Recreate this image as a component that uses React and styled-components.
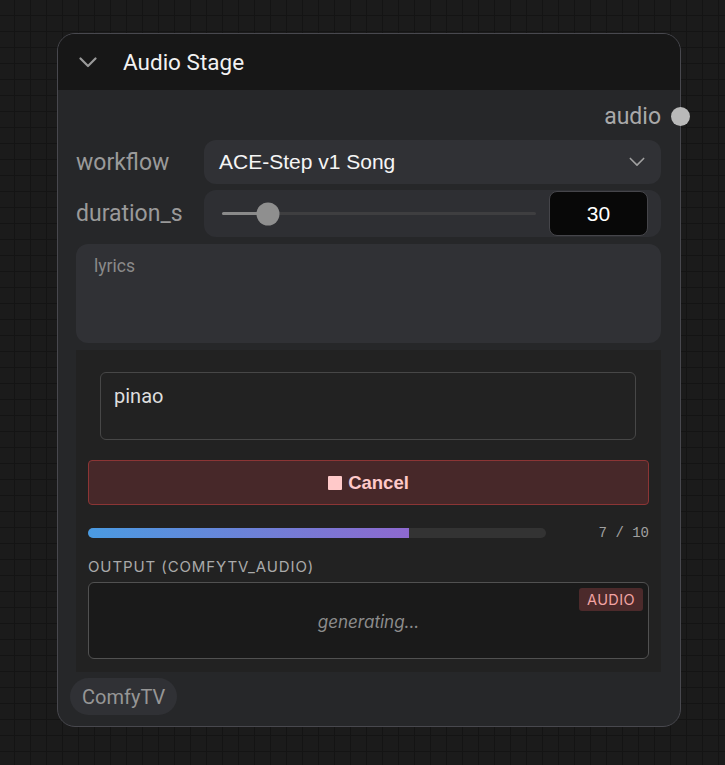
import React from "react";
import styled, { createGlobalStyle } from "styled-components";

const Global = createGlobalStyle`
  html, body { margin: 0; padding: 0; }
  body {
    width: 725px; height: 765px; overflow: hidden;
    background-color: #1b1b1b;
    background-image:
      linear-gradient(to right, #141414 1px, transparent 1px),
      linear-gradient(to bottom, #141414 1px, transparent 1px);
    background-size: 16px 16px;
    background-position: 14px 15px;
    font-family: "Liberation Sans", Arial, sans-serif;
  }
`;

const Canvas = styled.div`
  position: relative;
  width: 725px;
  height: 765px;
`;

const Node = styled.div`
  position: absolute;
  left: 57px;
  top: 33px;
  width: 622px;
  height: 692px;
  border: 1px solid #48484e;
  border-radius: 18px;
  background: #262729;
  display: flex;
  flex-direction: column;
  box-sizing: content-box;
`;

const Header = styled.div`
  height: 56px;
  background: #171717;
  border-radius: 17px 17px 0 0;
  display: flex;
  align-items: center;
  padding-left: 21px;
  gap: 26px;
`;

const Title = styled.div`
  font-family: Roboto, "Liberation Sans", sans-serif;
  font-size: 22.5px;
  font-weight: 400;
  color: #f2f2f2;
`;

const Body = styled.div`
  display: flex;
  flex-direction: column;
  padding: 14px 19px 0 18px;
`;

const OutputRow = styled.div`
  position: relative;
  height: 24px;
  display: flex;
  justify-content: flex-end;
  align-items: center;
  margin-bottom: 12px;
`;

const OutputName = styled.span`
  font-family: Roboto, "Liberation Sans", sans-serif;
  font-size: 23px;
  color: #a9a9a9;
`;

const Socket = styled.span`
  position: absolute;
  right: -29px;
  top: 3px;
  width: 19px;
  height: 19px;
  border-radius: 50%;
  background: #b9b9b9;
`;

const WidgetRow = styled.div`
  display: flex;
  align-items: center;
  height: ${(p) => p.$h}px;
  margin-bottom: ${(p) => p.$mb}px;
`;

const Label = styled.div`
  width: 128px;
  flex: none;
  font-family: Roboto, "Liberation Sans", sans-serif;
  font-size: 23px;
  color: #9a9a9a;
`;

const Select = styled.div`
  flex: 1;
  height: 100%;
  background: #303135;
  border-radius: 12px;
  display: flex;
  align-items: center;
  justify-content: space-between;
  padding: 0 16px 0 15px;
  font-size: 21px;
  color: #f5f5f5;
`;

const SliderBox = styled.div`
  flex: 1;
  height: 100%;
  background: #2e2f33;
  border-radius: 12px;
  display: flex;
  align-items: center;
  padding: 1px 13px 1px 18px;
  gap: 13px;
  box-sizing: border-box;
`;

const Track = styled.div`
  position: relative;
  flex: 1;
  height: 3px;
  background: #3e3e40;
  border-radius: 2px;
`;

const TrackFill = styled.div`
  height: 100%;
  background: #8a8a8a;
  border-radius: 2px;
`;

const Thumb = styled.div`
  position: absolute;
  top: 50%;
  width: 23px;
  height: 23px;
  border-radius: 50%;
  background: #8f8f8f;
  transform: translate(-50%, -50%);
`;

const NumberBox = styled.div`
  width: 99px;
  height: 100%;
  box-sizing: border-box;
  background: #080808;
  border: 1px solid #45454a;
  border-radius: 8px;
  display: flex;
  align-items: center;
  justify-content: center;
  font-size: 21px;
  color: #ffffff;
`;

const Lyrics = styled.div`
  height: 99px;
  margin-bottom: 7px;
  background: #303135;
  border-radius: 12px;
  padding: 12px 18px;
  box-sizing: border-box;
  font-family: Roboto, "Liberation Sans", sans-serif;
  font-size: 17.5px;
  color: #8a8a8a;
`;

const Panel = styled.div`
  background: #222222;
  display: flex;
  flex-direction: column;
  padding: 22px 12px 13px;
  margin-bottom: 6px;
`;

const Prompt = styled.div`
  margin: 0 13px 20px 12px;
  height: 68px;
  box-sizing: border-box;
  border: 1px solid #474747;
  border-radius: 6px;
  background: #222222;
  padding: 11px 13px;
  font-family: Roboto, "Liberation Sans", sans-serif;
  font-size: 20px;
  color: #dedede;
`;

const CancelButton = styled.div`
  height: 45px;
  box-sizing: border-box;
  background: #472829;
  border: 1px solid #8c3535;
  border-radius: 4px;
  display: flex;
  align-items: center;
  justify-content: center;
  gap: 6px;
  font-size: 18.5px;
  font-weight: 700;
  color: #ffc9c9;
  margin-bottom: 22px;
  padding-top: 1px;
`;

const StopSquare = styled.span`
  width: 14px;
  height: 14px;
  background: #ffc9c9;
  border-radius: 1px;
`;

const ProgressRow = styled.div`
  display: flex;
  align-items: center;
  height: 10px;
  margin-top: 1px;
  margin-bottom: 19px;
`;

const Bar = styled.div`
  flex: 1;
  height: 10px;
  border-radius: 5px;
  background: #333333;
  overflow: hidden;
`;

const BarFill = styled.div`
  height: 100%;
  background: linear-gradient(to right, #4a9be2, #8e69cf);
`;

const Count = styled.div`
  width: 103px;
  text-align: right;
  font-family: "Liberation Mono", monospace;
  font-size: 14px;
  color: #a0a0a0;
`;

const SectionLabel = styled.div`
  font-family: Inter, "Liberation Sans", sans-serif;
  font-size: 15px;
  letter-spacing: 0.9px;
  color: #aaaaaa;
  margin-bottom: 6px;
`;

const OutputBox = styled.div`
  position: relative;
  height: 77px;
  box-sizing: border-box;
  background: #1a1a1a;
  border: 1px solid #515151;
  border-radius: 6px;
  display: flex;
  align-items: center;
  justify-content: center;
  font-family: Inter, "Liberation Sans", sans-serif;
  font-style: italic;
  font-size: 17px;
  color: #8c8c8c;
  padding-top: 2px;
`;

const Badge = styled.span`
  position: absolute;
  top: 5px;
  right: 5px;
  background: #4c2a2b;
  color: #f2a3a3;
  font-family: Inter, "Liberation Sans", sans-serif;
  font-style: normal;
  font-size: 14.5px;
  letter-spacing: 0.4px;
  padding: 3px 8px;
  border-radius: 3px;
`;

const Footer = styled.div`
  display: flex;
  margin-left: -6px;
`;

const Pill = styled.div`
  height: 37px;
  padding: 0 12px;
  border-radius: 19px;
  background: #303135;
  display: flex;
  align-items: center;
  font-family: Roboto, "Liberation Sans", sans-serif;
  font-size: 20px;
  color: #969696;
`;

const Chevron = ({ size = 18, color = "#999", stroke = 2 }) => (
  <svg width={size} height={size / 2 + 2} viewBox="0 0 18 11" fill="none">
    <path d="M1.5 1.5 L9 9 L16.5 1.5" stroke={color} strokeWidth={stroke} strokeLinecap="round" strokeLinejoin="round" />
  </svg>
);

export default function App() {
  const sliderPct = 14.6;
  const progress = 70;
  return (
    <Canvas>
      <Global />
      <Node>
        <Header>
          <Chevron size={18} color="#9a9a9a" stroke={2.2} />
          <Title>Audio Stage</Title>
        </Header>
        <Body>
          <OutputRow>
            <OutputName>audio</OutputName>
            <Socket />
          </OutputRow>
          <WidgetRow $h={44} $mb={6}>
            <Label>workflow</Label>
            <Select>
              <span>ACE-Step v1 Song</span>
              <Chevron size={16} color="#a0a0a0" stroke={1.8} />
            </Select>
          </WidgetRow>
          <WidgetRow $h={47} $mb={7}>
            <Label>duration_s</Label>
            <SliderBox>
              <Track>
                <TrackFill style={{ width: `${sliderPct}%` }} />
                <Thumb style={{ left: `${sliderPct}%` }} />
              </Track>
              <NumberBox>30</NumberBox>
            </SliderBox>
          </WidgetRow>
          <Lyrics>lyrics</Lyrics>
          <Panel>
            <Prompt>pinao</Prompt>
            <CancelButton>
              <StopSquare />
              Cancel
            </CancelButton>
            <ProgressRow>
              <Bar>
                <BarFill style={{ width: `${progress}%` }} />
              </Bar>
              <Count>7 / 10</Count>
            </ProgressRow>
            <SectionLabel>OUTPUT (COMFYTV_AUDIO)</SectionLabel>
            <OutputBox>
              generating...
              <Badge>AUDIO</Badge>
            </OutputBox>
          </Panel>
          <Footer>
            <Pill>ComfyTV</Pill>
          </Footer>
        </Body>
      </Node>
    </Canvas>
  );
}
